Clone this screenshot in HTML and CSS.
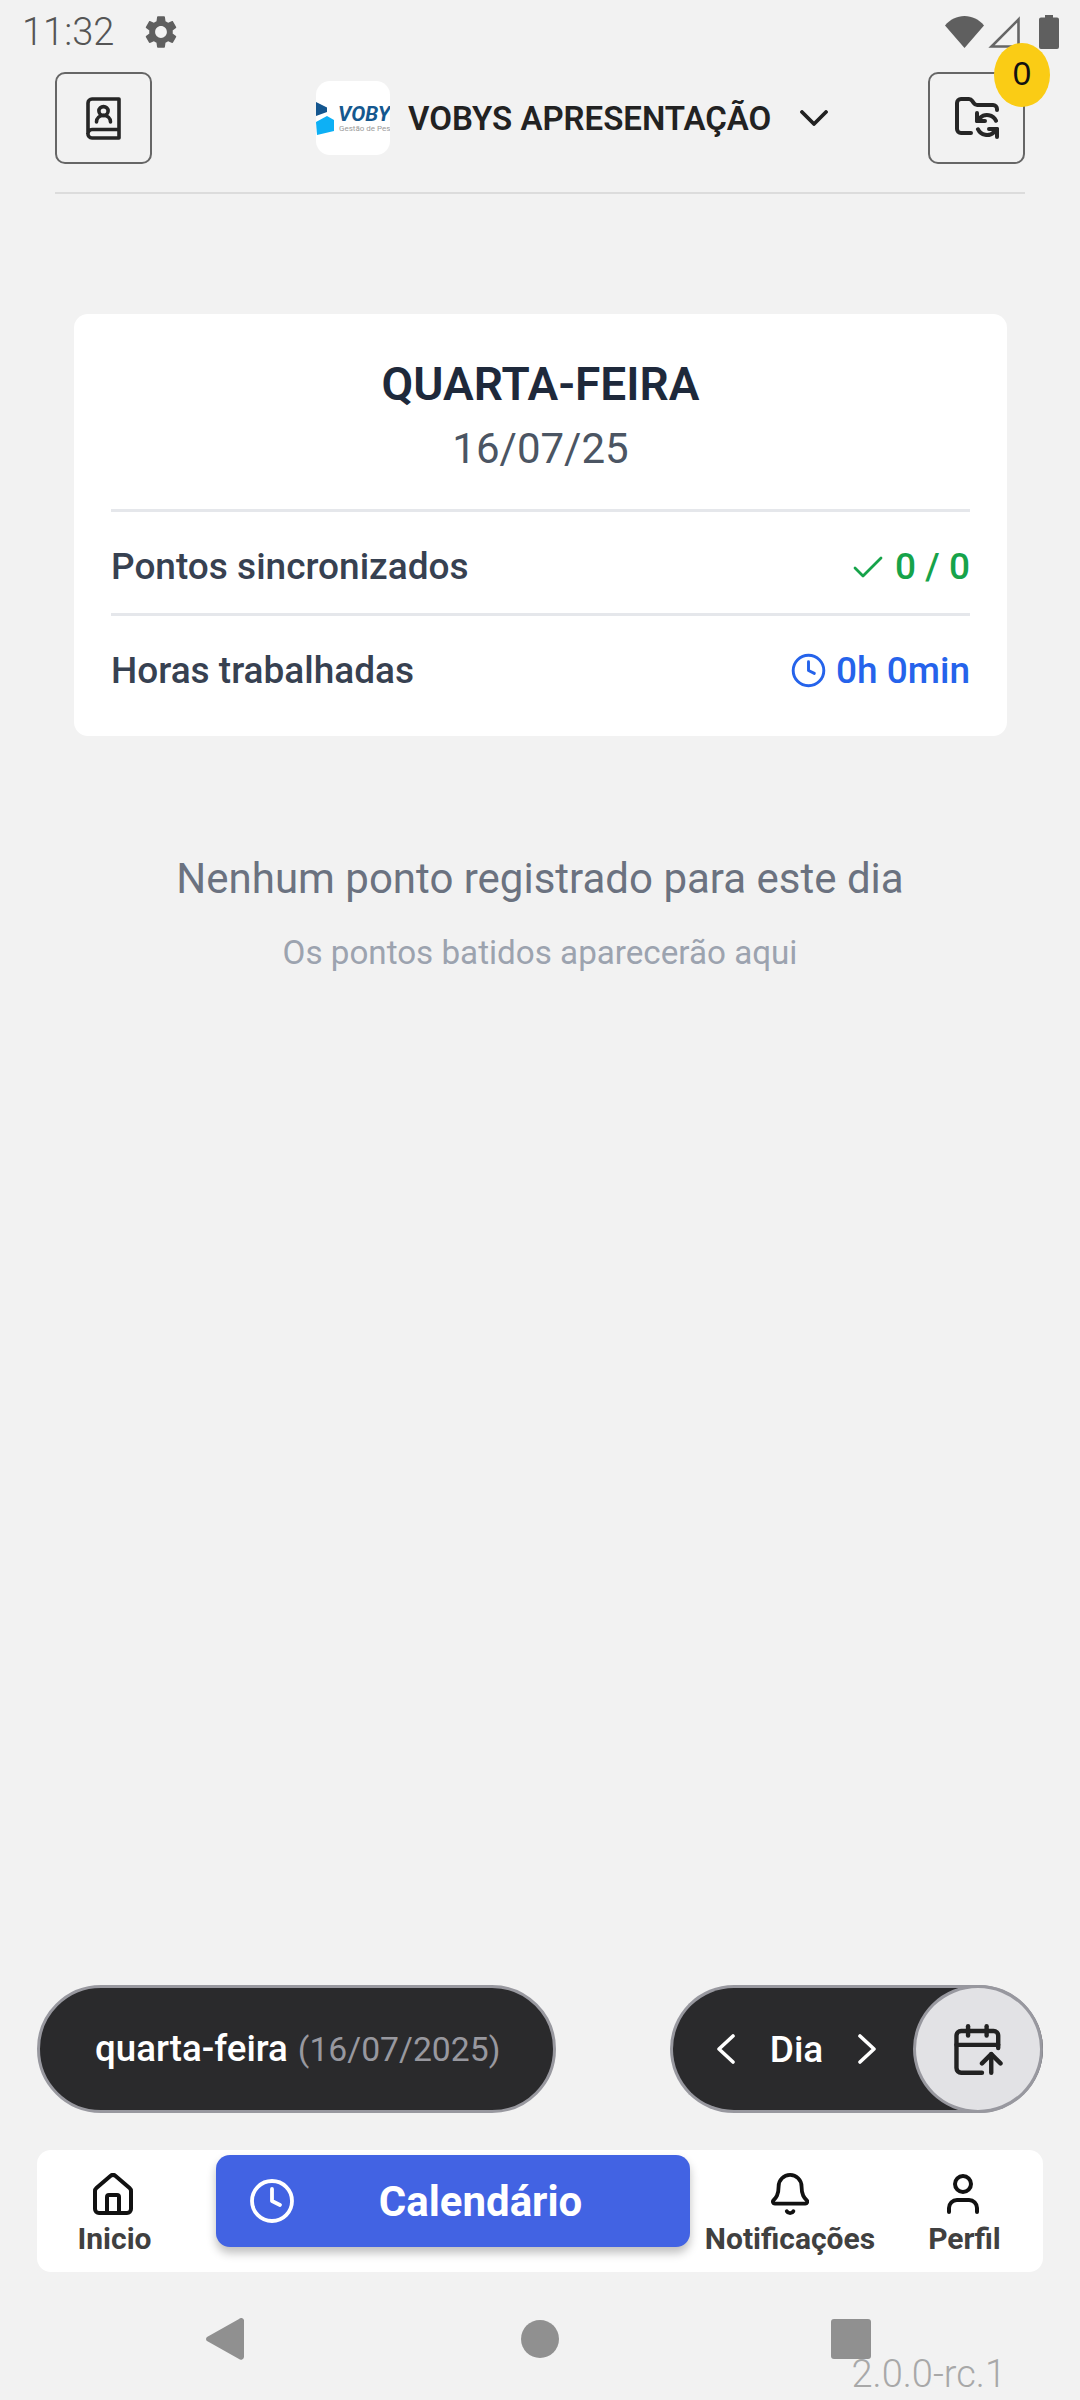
FILE: index.html
```html
<!DOCTYPE html>
<html lang="pt-BR">
<head>
    <meta charset="utf-8">
    <title>Calendário</title>
    <link rel="stylesheet" href="styles.css">
</head>
<body>
    <div class="page">
        <div class="status-bar">
            <span class="status-time">11:32</span>
            <svg class="status-gear" viewBox="2.4 1.6 19.2 20.8" fill="#5f5f5f"><path d="M19.14 12.94c.04-.3.06-.61.06-.94 0-.32-.02-.64-.07-.94l2.03-1.58c.18-.14.23-.41.12-.61l-1.92-3.32c-.12-.22-.37-.29-.59-.22l-2.39.96c-.5-.38-1.03-.7-1.62-.94l-.36-2.54c-.04-.24-.24-.41-.48-.41h-3.84c-.24 0-.43.17-.47.41l-.36 2.54c-.59.24-1.13.57-1.62.94l-2.39-.96c-.22-.08-.47 0-.59.22L2.74 8.87c-.12.21-.08.47.12.61l2.03 1.58c-.05.3-.09.63-.09.94s.02.64.07.94l-2.03 1.58c-.18.14-.23.41-.12.61l1.92 3.32c.12.22.37.29.59.22l2.39-.96c.5.38 1.03.7 1.62.94l.36 2.54c.05.24.24.41.48.41h3.84c.24 0 .44-.17.47-.41l.36-2.54c.59-.24 1.13-.56 1.62-.94l2.39.96c.22.08.47 0 .59-.22l1.92-3.32c.12-.22.07-.47-.12-.61l-2.01-1.58zM12 15.6c-1.98 0-3.6-1.62-3.6-3.6s1.62-3.6 3.6-3.6 3.6 1.62 3.6 3.6-1.62 3.6-3.6 3.6z"/></svg>
            <div class="status-icons">
                <svg class="status-wifi" viewBox="0 0 39 32" fill="#5f5f5f"><path d="M0 9.5C5 3.5 12 0 19.500 0S34 3.500 39 9.500L19.500 32z"/></svg>
                <svg class="status-signal" viewBox="0 0 32 32" fill="none" stroke="#666" stroke-width="2.600"><path d="M30.500 3.500V30.500H3.500z"/></svg>
                <svg class="status-battery" viewBox="0 0 20 34" fill="#5f5f5f"><path d="M6 0h8v2.500h4a2 2 0 0 1 2 2V32a2 2 0 0 1-2 2H2a2 2 0 0 1-2-2V4.500a2 2 0 0 1 2-2h4z"/></svg>
            </div>
        </div>

        <header class="header">
            <button class="icon-box">
                <svg class="book-icon" viewBox="0 0 35 43" fill="none" stroke="#262626" stroke-width="3.600" stroke-linecap="round" stroke-linejoin="round"><path d="M2 36V6a4 4 0 0 1 4-4h27v39H6a4 4 0 0 1-4-4.500 4 4 0 0 1 4-4h27"/><ellipse cx="17.500" cy="14" rx="4.600" ry="4.400"/><path d="M10.500 25c0-4 3-6.500 7-6.500s7 2.500 7 6.500"/></svg>
            </button>
            <div class="company">
                <div class="logo">
                    <svg class="logo-mark" viewBox="0 0 18 33"><path d="M0 0 11 5.500V10L0 14z" fill="#14568f"/><path d="M0 20 11 14 18 18V29L1 33z" fill="#0db0f5"/></svg>
                    <span class="logo-name">VOBYS</span>
                    <span class="logo-sub">Gestão de Pessoas</span>
                </div>
                <span class="company-name">VOBYS APRESENTAÇÃO</span>
                <svg class="company-chevron" viewBox="0 0 28 16" fill="none" stroke="#222" stroke-width="3.800" stroke-linecap="round" stroke-linejoin="round"><path d="M2 2 14 14 26 2"/></svg>
            </div>
            <button class="icon-box">
                <svg class="folder-icon" viewBox="1 2 22 21" fill="none" stroke="#262626" stroke-width="2" stroke-linecap="round" stroke-linejoin="round"><path d="M9 20H4a2 2 0 0 1-2-2V5a2 2 0 0 1 2-2h3.900a2 2 0 0 1 1.690.9l.81 1.200a2 2 0 0 0 1.670.9H20a2 2 0 0 1 2 2v.5"/><path d="M12 10v4h4"/><path d="m12 14 1.535-1.605a5 5 0 0 1 8 1.500"/><path d="M22 22v-4h-4"/><path d="m22 18-1.535 1.605a5 5 0 0 1-8-1.500"/></svg>
                <span class="badge">0</span>
            </button>
        </header>

        <section class="day-card">
            <h1 class="day-name">QUARTA-FEIRA</h1>
            <div class="day-date">16/07/25</div>
            <div class="day-row">
                <span>Pontos sincronizados</span>
                <span class="day-value green">
                    <svg class="check-icon" viewBox="0 0 30 24" fill="none" stroke="#16a34a" stroke-width="2.800" stroke-linecap="round" stroke-linejoin="round"><path d="M2 13 10 21 28 3"/></svg>
                    0 / 0
                </span>
            </div>
            <div class="day-row">
                <span>Horas trabalhadas</span>
                <span class="day-value blue">
                    <svg class="row-clock" viewBox="0 0 24 24" fill="none" stroke="#2563eb" stroke-width="2" stroke-linecap="round" stroke-linejoin="round"><circle cx="12" cy="12" r="10.500"/><path d="M12 6v6l4 2"/></svg>
                    0h 0min
                </span>
            </div>
        </section>

        <div class="empty">
            <p class="empty-title">Nenhum ponto registrado para este dia</p>
            <p class="empty-sub">Os pontos batidos aparecerão aqui</p>
        </div>

        <div class="spacer"></div>

        <div class="controls">
            <div class="date-pill"><b>quarta-feira</b> <span>(16/07/2025)</span></div>
            <div class="period-pill">
                <svg class="pill-chevron" viewBox="0 0 18 30" fill="none" stroke="#fff" stroke-width="3.600" stroke-linecap="round" stroke-linejoin="round"><path d="M16 2 2 15 16 28"/></svg>
                <span class="period-label">Dia</span>
                <svg class="pill-chevron" viewBox="0 0 18 30" fill="none" stroke="#fff" stroke-width="3.600" stroke-linecap="round" stroke-linejoin="round"><path d="M2 2 16 15 2 28"/></svg>
                <div class="period-action">
                    <svg class="calendar-icon" viewBox="2 1 21 22" fill="none" stroke="#222" stroke-width="1.900" stroke-linecap="round" stroke-linejoin="round"><path d="m14 18 4-4 4 4"/><path d="M16 2v4"/><path d="M18 22v-8"/><path d="M21 11.343V6a2 2 0 0 0-2-2H5a2 2 0 0 0-2 2v14a2 2 0 0 0 2 2h9"/><path d="M3 10h18"/><path d="M8 2v4"/></svg>
                </div>
            </div>
        </div>

        <nav class="tabs">
            <div class="tab tab-home">
                <svg class="tab-icon" viewBox="2 1 20 21" fill="none" stroke="#111" stroke-width="2" stroke-linecap="round" stroke-linejoin="round"><path d="M15 21v-8a1 1 0 0 0-1-1h-4a1 1 0 0 0-1 1v8"/><path d="M3 10a2 2 0 0 1 .709-1.528l7-6a2 2 0 0 1 2.582 0l7 6A2 2 0 0 1 21 10v9a2 2 0 0 1-2 2H5a2 2 0 0 1-2-2z"/></svg>
                <span>Inicio</span>
            </div>
            <div class="tab-active">
                <svg class="active-clock" viewBox="1 1 22 22" fill="none" stroke="#fff" stroke-width="1.900" stroke-linecap="round" stroke-linejoin="round"><circle cx="12" cy="12" r="10"/><path d="M12 6v6l4 2"/></svg>
                <span class="active-label">Calendário</span>
            </div>
            <div class="tab tab-bell">
                <svg class="tab-icon" viewBox="2 1 20 22" fill="none" stroke="#111" stroke-width="2" stroke-linecap="round" stroke-linejoin="round"><path d="M10.268 21a2 2 0 0 0 3.464 0"/><path d="M3.262 15.326A1 1 0 0 0 4 17h16a1 1 0 0 0 .74-1.673C19.410 13.956 18 12.499 18 8A6 6 0 0 0 6 8c0 4.499-1.411 5.956-2.738 7.326"/></svg>
                <span>Notificações</span>
            </div>
            <div class="tab tab-user">
                <svg class="tab-icon" viewBox="3 1.500 18 21" fill="none" stroke="#111" stroke-width="2" stroke-linecap="round" stroke-linejoin="round"><path d="M19 21v-2a4 4 0 0 0-4-4H9a4 4 0 0 0-4 4v2"/><circle cx="12" cy="7" r="4"/></svg>
                <span>Perfil</span>
            </div>
        </nav>

        <div class="system-nav">
            <svg class="sys-back" viewBox="0 0 38 42" fill="#909090"><path d="M1 19 33 1a3 3 0 0 1 5 1V39a3 3 0 0 1-5 2L1 23a2.500 2.500 0 0 1 0-4z"/></svg>
            <span class="sys-home"></span>
            <span class="sys-square"></span>
        </div>
        <span class="version">2.0.0-rc.1</span>
    </div>
</body>
</html>
```

FILE: styles.css
```css
* {
    box-sizing: border-box;
}

body {
    margin: 0;
    background-color: #f2f2f2;
    font-family: Roboto, "Noto Sans", sans-serif;
}

.page {
    position: relative;
    display: flex;
    flex-direction: column;
    width: 1080px;
    height: 2400px;
    overflow: hidden;
}

/* barra de status */
.status-bar {
    display: flex;
    align-items: center;
    height: 64px;
    padding: 0 21px 0 22px;
}

.status-time {
    font-size: 38px;
    font-weight: 300;
    color: #555;
}

.status-gear {
    width: 32px;
    height: 34px;
    margin-left: 31px;
}

.status-icons {
    display: flex;
    align-items: center;
    margin-left: auto;
}

.status-wifi {
    width: 39px;
    height: 32px;
}

.status-signal {
    width: 32px;
    height: 32px;
    margin-left: 4px;
}

.status-battery {
    width: 20px;
    height: 34px;
    margin-left: 19px;
}

/* cabecalho */
.header {
    display: flex;
    align-items: center;
    margin: 8px 55px 0;
    padding-bottom: 28px;
    border-bottom: 2px solid #dcdcdc;
}

.icon-box {
    position: relative;
    display: flex;
    align-items: center;
    justify-content: center;
    width: 97px;
    height: 92px;
    padding: 0;
    background: none;
    border: 2.500px solid #666;
    border-radius: 10px;
}

.book-icon {
    width: 35px;
    height: 43px;
}

.folder-icon {
    width: 44px;
    height: 42px;
}

.badge {
    position: absolute;
    top: -31px;
    right: -27px;
    width: 56px;
    height: 64px;
    border-radius: 50%;
    background-color: #facc15;
    color: #111;
    font-size: 33px;
    line-height: 62px;
    text-align: center;
}

.company {
    display: flex;
    align-items: center;
    margin: 0 auto 0 164px;
}

.logo {
    position: relative;
    width: 74px;
    height: 74px;
    overflow: hidden;
    border-radius: 14px;
    background-color: #fff;
}

.logo-mark {
    position: absolute;
    top: 21px;
    left: 0;
    width: 18px;
    height: 33px;
}

.logo-name {
    position: absolute;
    top: 21px;
    left: 22px;
    font-size: 21px;
    line-height: 24px;
    font-weight: 700;
    font-style: italic;
    color: #15588f;
}

.logo-sub {
    position: absolute;
    top: 43px;
    left: 23px;
    font-size: 8px;
    line-height: 10px;
    white-space: nowrap;
    color: #9a9a9a;
}

.company-name {
    margin-left: 18px;
    font-size: 33px;
    font-weight: 600;
    color: #222;
}

.company-chevron {
    width: 28px;
    height: 16px;
    margin-left: 29px;
}

/* cartao do dia */
.day-card {
    margin: 120px 73px 0 74px;
    padding: 44px 37px 19px;
    background-color: #fff;
    border-radius: 14px;
}

.day-name {
    margin: 0;
    font-size: 46px;
    line-height: 52px;
    font-weight: 600;
    text-align: center;
    color: #1e293b;
}

.day-date {
    margin-top: 14px;
    padding-bottom: 35px;
    font-size: 42px;
    line-height: 50px;
    font-weight: 400;
    text-align: center;
    color: #4b5563;
}

.day-row {
    display: flex;
    align-items: center;
    justify-content: space-between;
    height: 104px;
    padding-top: 8px;
    border-top: 3px solid #e5e7eb;
    font-size: 37px;
    font-weight: 500;
    color: #374151;
}

.day-value {
    display: flex;
    align-items: center;
}

.green {
    color: #16a34a;
}

.blue {
    color: #2563eb;
}

.check-icon {
    width: 30px;
    height: 24px;
    margin-right: 12px;
}

.row-clock {
    width: 35px;
    height: 35px;
    margin-right: 10px;
}

/* estado vazio */
.empty {
    margin-top: 118px;
    text-align: center;
}

.empty-title {
    margin: 0;
    font-size: 42px;
    line-height: 50px;
    color: #6b7280;
}

.empty-sub {
    margin: 29px 0 0;
    font-size: 33.200px;
    line-height: 40px;
    color: #9ca3af;
}

.spacer {
    flex: 1;
}

/* controles de baixo */
.controls {
    display: flex;
    justify-content: space-between;
    margin: 0 37px;
}

.date-pill {
    width: 519px;
    height: 128px;
    padding-left: 55px;
    background-color: #2a2a2c;
    border: 3px solid #98989f;
    border-radius: 64px;
    line-height: 122px;
    white-space: nowrap;
    color: #fff;
}

.date-pill b {
    font-size: 36.700px;
    font-weight: 500;
}

.date-pill span {
    margin-left: 6px;
    font-size: 33.700px;
    font-weight: 400;
    color: #98989f;
}

.period-pill {
    position: relative;
    display: flex;
    align-items: center;
    width: 373px;
    height: 128px;
    padding-left: 44px;
    background-color: #2a2a2c;
    border: 3px solid #98989f;
    border-right: none;
    border-radius: 64px;
}

.pill-chevron {
    width: 18px;
    height: 30px;
}

.period-label {
    width: 123px;
    font-size: 37px;
    font-weight: 500;
    text-align: center;
    color: #fff;
}

.period-action {
    position: absolute;
    top: -3px;
    right: 0;
    display: flex;
    align-items: center;
    justify-content: center;
    width: 130px;
    height: 128px;
    background-color: #e2e2e5;
    border: 3px solid #98989f;
    border-radius: 50%;
}

.calendar-icon {
    width: 49px;
    height: 51px;
}

/* navegacao */
.tabs {
    display: flex;
    height: 122px;
    margin: 37px 37px 0;
    background-color: #fff;
    border-radius: 14px;
}

.tab {
    display: flex;
    flex-direction: column;
    align-items: center;
    padding-top: 23px;
    font-size: 30px;
    font-weight: 700;
    color: #404040;
}

.tab-home {
    width: 179px;
    padding-right: 24px;
}

.tab-home .tab-icon {
    margin-right: 4px;
}

.tab-bell {
    width: 200px;
}

.tab-user {
    width: 153px;
    padding-right: 4px;
}

.tab-user .tab-icon {
    margin-right: 4px;
}

.tab-icon {
    height: 42px;
    margin-bottom: 6px;
}

.tab-active {
    position: relative;
    display: flex;
    align-items: center;
    justify-content: center;
    width: 474px;
    height: 92px;
    margin-top: 5px;
    padding-left: 55px;
    background-color: #4263e3;
    border-radius: 14px;
    box-shadow: 0 6px 10px rgba(0, 0, 0, 0.25);
}

.active-clock {
    position: absolute;
    left: 34px;
    width: 44px;
    height: 44px;
}

.active-label {
    font-size: 42px;
    font-weight: 700;
    color: #fff;
}

/* barra do sistema */
.system-nav {
    display: flex;
    align-items: flex-start;
    height: 128px;
    padding: 46px 0 0 206px;
}

.sys-back {
    width: 38px;
    height: 42px;
}

.sys-home {
    width: 38px;
    height: 38px;
    margin: 2px 0 0 277px;
    border-radius: 50%;
    background-color: #909090;
}

.sys-square {
    width: 40px;
    height: 40px;
    margin: 1px 0 0 272px;
    border-radius: 3px;
    background-color: #909090;
}

.version {
    position: absolute;
    right: 74px;
    bottom: 6px;
    font-size: 38px;
    font-weight: 300;
    line-height: 40px;
    color: #a8a8a8;
}
```
